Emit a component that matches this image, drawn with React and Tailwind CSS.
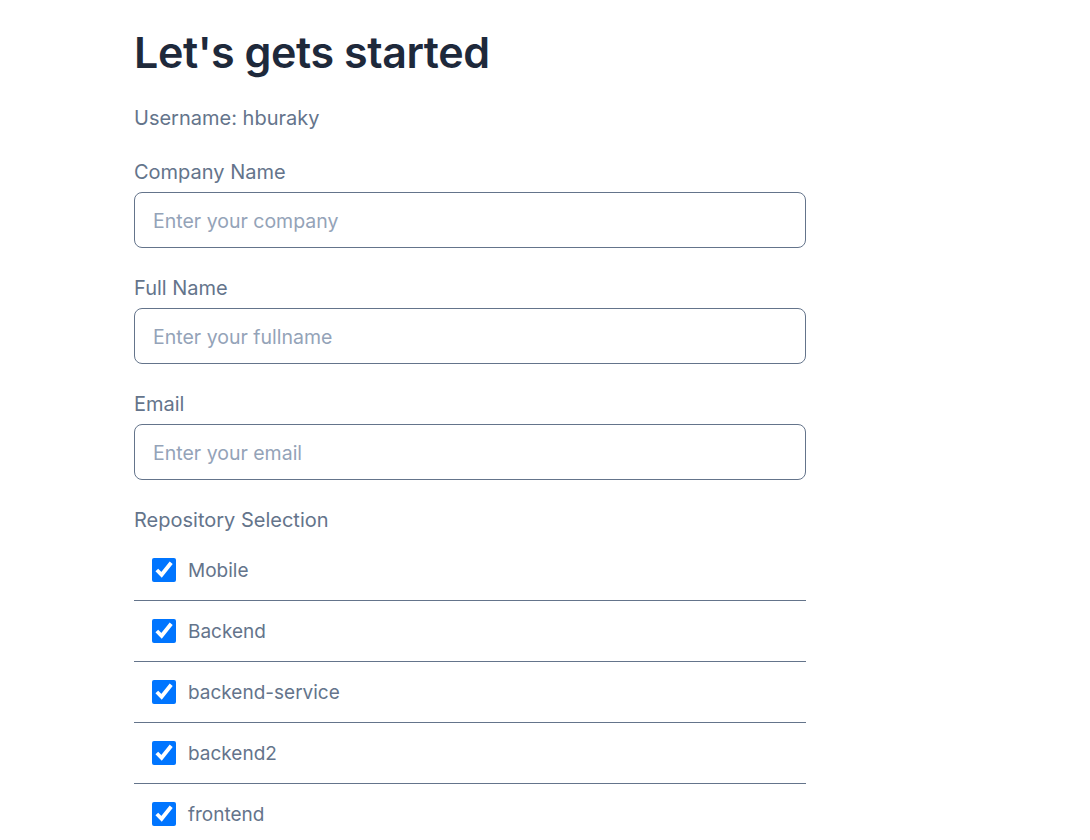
import React from "react";

const repos = ["Mobile", "Backend", "backend-service", "backend2", "frontend"];

function Field({ label, placeholder }) {
  return (
    <div className="flex flex-col mb-7">
      <label className="text-[20px] leading-6 text-[#64748b] mb-2">{label}</label>
      <input
        type="text"
        placeholder={placeholder}
        className="h-14 w-full rounded-lg border border-[#64748b] px-[18px] pt-px text-[19.5px] text-[#334155] placeholder:text-[#94a3b8] outline-none"
      />
    </div>
  );
}

export default function App() {
  return (
    <div className="min-h-[840px] bg-white" style={{ fontFamily: "Inter, 'Noto Sans', sans-serif" }}>
      <div className="ml-[134px] w-[672px] pt-7">
        <h1 className="text-[43px] leading-[48px] font-semibold text-[#1e293b] tracking-[-0.01em]">Let's gets started</h1>
        <p className="mt-[30px] text-[20px] leading-6 text-[#64748b]">Username: hburaky</p>
        <div className="mt-[30px]">
          <Field label="Company Name" placeholder="Enter your company" />
          <Field label="Full Name" placeholder="Enter your fullname" />
          <Field label="Email" placeholder="Enter your email" />
        </div>
        <div className="text-[20px] leading-6 text-[#64748b] mb-2">Repository Selection</div>
        <div className="flex flex-col">
          {repos.map((r, i) => (
            <div
              key={r}
              className={"flex items-center gap-3 pl-[18px] py-[15px] " + (i < repos.length - 1 ? "border-b border-[#64748b]" : "")}
            >
              <input type="checkbox" defaultChecked className="w-6 h-6 m-0" />
              <span className="text-[19px] leading-7 pt-0.5 text-[#64748b]">{r}</span>
            </div>
          ))}
        </div>
      </div>
    </div>
  );
}
